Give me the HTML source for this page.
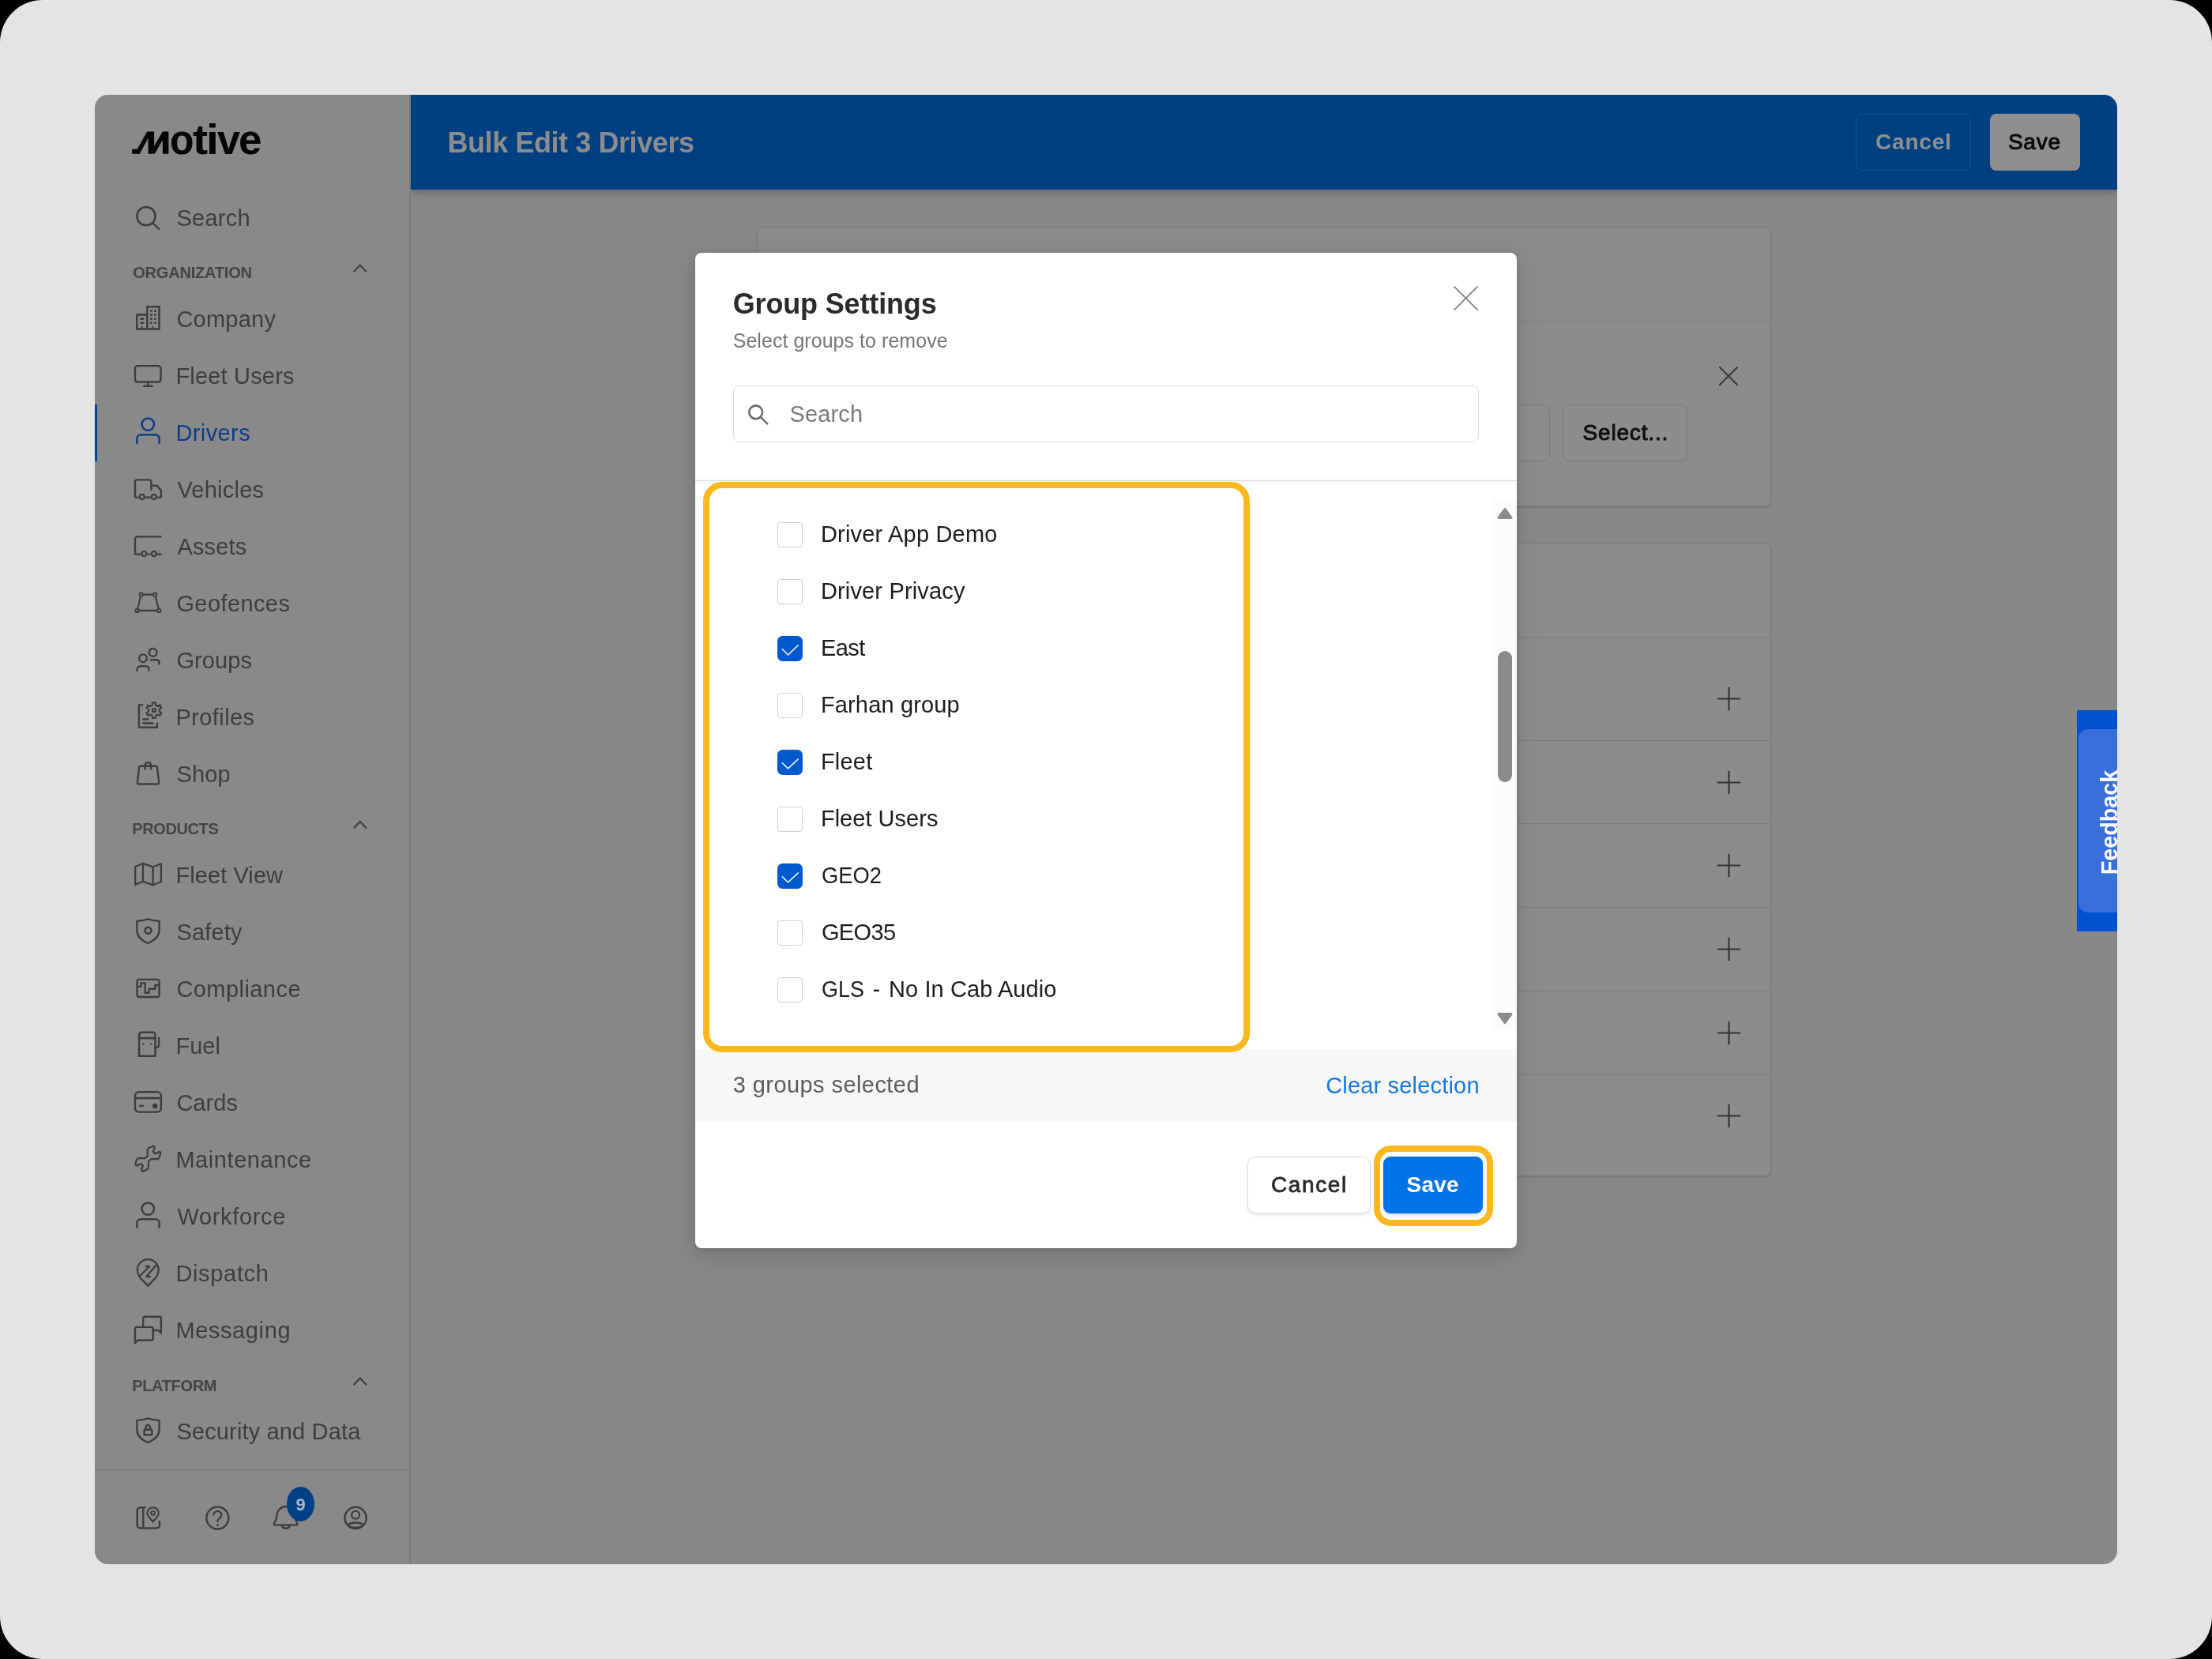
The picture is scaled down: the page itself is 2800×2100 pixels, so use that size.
<!DOCTYPE html>
<html lang="en">
<head>
<meta charset="utf-8">
<title>Bulk Edit 3 Drivers - Group Settings</title>
<style>
*{box-sizing:border-box;margin:0;padding:0}
html,body{width:2800px;height:2100px;background:#000;overflow:hidden}
body{font-family:"Liberation Sans",sans-serif;position:relative}
.frame{position:absolute;left:0;top:0;width:2800px;height:2100px;background:#e4e4e4;border-radius:54px;overflow:hidden}
.app{position:absolute;left:120px;top:120px;width:2560px;height:1860px;border-radius:17px;overflow:hidden;background:#888888}
.abs{position:absolute}
.t{position:absolute;white-space:pre;line-height:1;font-family:"Liberation Sans",sans-serif}
.page{position:absolute;left:-120px;top:-120px;width:2800px;height:2100px;will-change:transform}
.sidebar{position:absolute;left:120px;top:120px;width:400px;height:1860px;background:#898989;border-right:2px solid #7b7b7b}
.sbline{position:absolute;left:120px;top:1860px;width:398px;height:1px;background:#7a7a7a}
.activebar{position:absolute;left:120px;top:512px;width:3px;height:72px;background:#0047a3}
.header{position:absolute;left:520px;top:120px;width:2160px;height:120px;background:#003f80;box-shadow:0 3px 10px rgba(0,0,0,.28);clip-path:inset(0 0 -30px 0)}
.hbtn{position:absolute;top:144px;height:72px;border-radius:8px}
.card{position:absolute;left:958px;width:1284px;background:#8c8c8c;border:1px solid #7b7b7b;border-radius:8px;box-shadow:0 2px 2px rgba(0,0,0,.10)}
.hr{position:absolute;left:959px;width:1282px;height:1px;background:#7e7e7e}
.obtn{position:absolute;border:1px solid #7a7a7a;border-radius:8px;background:#8d8d8d}
.modal{position:absolute;left:880px;top:320px;width:1040px;height:1260px;background:#fff;border-radius:8px;box-shadow:0 8px 26px rgba(0,0,0,.17),0 1px 5px rgba(0,0,0,.10)}
.cb{position:absolute;left:984px;width:32px;height:32px;border:1px solid #cfcfcf;border-radius:4px;background:#fff}
.cb.on{border:none;background:#0059cc;border-radius:6.5px}
.hl{position:absolute;border:8px solid #fdb81e}
svg{position:absolute;overflow:visible}
</style>
</head>
<body>
<div class="frame">
<div class="app"><div class="page">
  <!-- main content background -->
  <div class="sidebar"></div>
  <div class="sbline"></div>
  <div class="activebar"></div>

  <!-- background cards -->
  <div class="card" style="top:287px;height:354px"></div>
  <div class="hr" style="top:407px"></div>
  <div class="obtn" style="left:1700px;top:512px;width:262px;height:72px"></div>
  <div class="obtn" style="left:1978px;top:512px;width:158px;height:72px"></div>

  <div class="card" style="top:687px;height:802px"></div>
  <div class="hr" style="top:807px"></div>
  <div class="hr" style="top:937px"></div>
  <div class="hr" style="top:1042px"></div>
  <div class="hr" style="top:1148px"></div>
  <div class="hr" style="top:1254px"></div>
  <div class="hr" style="top:1360px"></div>

  <!-- header -->
  <div class="header"></div>
  <div class="hbtn" style="left:2349px;width:146px;border:1px solid #1f548d"></div>
  <div class="hbtn" style="left:2519px;width:114px;background:#8f8f8f"></div>

  <!-- feedback tab -->
  <div class="abs" style="left:2629px;top:899px;width:60px;height:280px;background:#0052cc"></div>
  <div class="abs" style="left:2631px;top:923px;width:70px;height:232px;background:#386fd9;border-radius:12px"></div>
  <div class="abs" style="left:2669.8px;top:1040.7px;width:0;height:0"><span class="t" style="left:0;top:0;transform:translate(-50%,-50%) rotate(-90deg);font-size:28.7px;font-weight:700;color:#fff;letter-spacing:0.000px;">Feedback</span></div>

  <!-- modal -->
  <div class="modal"></div>
  <div class="abs" style="left:928px;top:488px;width:944px;height:72px;border:1px solid #dcdcdc;border-radius:8px"></div>
  <div class="abs" style="left:880px;top:608px;width:1040px;height:1px;background:#dcdcdc;box-shadow:0 1px 4px rgba(0,0,0,.22)"></div>
  <!-- scrollbar -->
  <div class="abs" style="left:1890px;top:632px;width:30px;height:672px;background:#fbfbfb"></div>
  <div class="abs" style="left:1896px;top:824px;width:18px;height:166px;border-radius:9px;background:#8b8b8b"></div>
  <!-- checkboxes -->
  <div class="cb" style="top:661px"></div>
  <div class="cb" style="top:733px"></div>
  <div class="cb on" style="top:805px"></div>
  <div class="cb" style="top:877px"></div>
  <div class="cb on" style="top:949px"></div>
  <div class="cb" style="top:1021px"></div>
  <div class="cb on" style="top:1093px"></div>
  <div class="cb" style="top:1165px"></div>
  <div class="cb" style="top:1237px"></div>
  <!-- selection bar -->
  <div class="abs" style="left:880px;top:1328px;width:1040px;height:92px;background:#f7f7f7"></div>
  <!-- list highlight -->
  <div class="hl" style="left:890px;top:609.5px;width:692px;height:722.5px;border-radius:24px"></div>
  <!-- modal buttons -->
  <div class="abs" style="left:1579px;top:1464px;width:156px;height:72px;border:1px solid #dedede;border-radius:10px;background:#fff;box-shadow:0 2px 4px rgba(0,0,0,.10)"></div>
  <div class="abs" style="left:1751px;top:1464px;width:126px;height:72px;border-radius:9px;background:#0073e6;box-shadow:0 2px 4px rgba(0,0,0,.18)"></div>
  <div class="hl" style="left:1738.5px;top:1450px;width:151.5px;height:101.5px;border-radius:22px"></div>

  <!-- icons -->
<svg style="left:0;top:0" width="2800" height="2100" viewBox="0 0 2800 2100" fill="none" stroke-linecap="round" stroke-linejoin="round"><polygon points="167.2,194.7 167.2,188.8 173.9,188.8 186.1,166.4 195.1,166.4 195.1,185.1 205.9,166.4 213.4,166.4 213.4,194.7 205.9,194.7 205.9,177.2 195.9,194.7 187.6,194.7 187.6,174.8 176.8,194.7" fill="#050505" stroke="none"/>
<circle cx="185" cy="273.7" r="11.6" stroke="#3d3d3d" stroke-width="2.5" fill="none"/>
<path d="M193.3 282.4 L201.4 289.8" stroke="#3d3d3d" stroke-width="2.5" fill="none" />
<path d="M448.3 343.5 L455.8 335.7 L463.3 343.5" stroke="#3d3d3d" stroke-width="2.2" fill="none" />
<path d="M448.3 1047.8 L455.8 1040.0 L463.3 1047.8" stroke="#3d3d3d" stroke-width="2.2" fill="none" />
<path d="M448.3 1752.4 L455.8 1744.6000000000001 L463.3 1752.4" stroke="#3d3d3d" stroke-width="2.2" fill="none" />
<path d="M186.3 388.3 H201.5 V416.6 H173.3 V398.5 H186.3 Z M186.3 398.5 V416.6" stroke="#3d3d3d" stroke-width="2.5" fill="none" stroke-linejoin="miter" stroke-linecap="butt"/>
<rect x="190.15" y="392.15" width="2.7" height="2.7" fill="#3d3d3d" stroke="none"/>
<rect x="195.05" y="392.15" width="2.7" height="2.7" fill="#3d3d3d" stroke="none"/>
<rect x="190.15" y="397.15" width="2.7" height="2.7" fill="#3d3d3d" stroke="none"/>
<rect x="195.05" y="397.15" width="2.7" height="2.7" fill="#3d3d3d" stroke="none"/>
<rect x="190.15" y="402.15" width="2.7" height="2.7" fill="#3d3d3d" stroke="none"/>
<rect x="195.05" y="402.15" width="2.7" height="2.7" fill="#3d3d3d" stroke="none"/>
<rect x="190.15" y="407.25" width="2.7" height="2.7" fill="#3d3d3d" stroke="none"/>
<rect x="195.05" y="407.25" width="2.7" height="2.7" fill="#3d3d3d" stroke="none"/>
<rect x="177.3" y="402.3" width="4.9" height="2.6" fill="#3d3d3d" stroke="none"/>
<rect x="177.3" y="407.5" width="4.9" height="2.6" fill="#3d3d3d" stroke="none"/>
<rect x="178.6" y="413" width="2" height="3.6" fill="#3d3d3d" stroke="none"/>
<rect x="192.8" y="413" width="2" height="3.6" fill="#3d3d3d" stroke="none"/>
<rect x="171" y="463.1" width="32.5" height="20.4" rx="3" stroke="#3d3d3d" stroke-width="2.4" fill="none"/>
<path d="M187.3 484 V488" stroke="#3d3d3d" stroke-width="2.4" fill="none" />
<path d="M181.3 488.7 H193.5" stroke="#3d3d3d" stroke-width="2.6" fill="none" stroke-linecap="butt"/>
<circle cx="187.3" cy="537.1" r="7.7" stroke="#0b3d88" stroke-width="2.5" fill="none"/>
<path d="M173.4 561.8 V555.2 a5 5 0 0 1 5 -5 H196.6 a5 5 0 0 1 5 5 V561.8" stroke="#0b3d88" stroke-width="2.5" fill="none" stroke-linecap="butt"/>
<circle cx="187.3" cy="1530.1" r="7.7" stroke="#3d3d3d" stroke-width="2.5" fill="none"/>
<path d="M173.4 1554.8 V1548.2 a5 5 0 0 1 5 -5 H196.6 a5 5 0 0 1 5 5 V1554.8" stroke="#3d3d3d" stroke-width="2.5" fill="none" stroke-linecap="butt"/>
<path d="M191.4 620.7 V610 a2.6 2.6 0 0 0 -2.6 -2.6 H173.6 a2.6 2.6 0 0 0 -2.6 2.6 V629.6 H175.4" stroke="#3d3d3d" stroke-width="2.4" fill="none" stroke-linecap="butt"/>
<path d="M191.4 614.6 H197.8 a1.6 1.6 0 0 1 1.2 .55 L203.5 620.3 a1.6 1.6 0 0 1 .4 1.05 V629.6 H199.2" stroke="#3d3d3d" stroke-width="2.4" fill="none" stroke-linecap="butt"/>
<path d="M184 629.6 H190.6" stroke="#3d3d3d" stroke-width="2.4" fill="none" stroke-linecap="butt"/>
<circle cx="179.7" cy="629" r="3.05" stroke="#3d3d3d" stroke-width="2.3" fill="none"/>
<circle cx="194.9" cy="629" r="3.05" stroke="#3d3d3d" stroke-width="2.3" fill="none"/>
<path d="M204.6 679.4 H174 a3 3 0 0 0 -3 3 V701.6 H178.1" stroke="#3d3d3d" stroke-width="2.4" fill="none" stroke-linecap="butt"/>
<path d="M186.7 701.6 H190.6 M199.2 701.6 H204.6" stroke="#3d3d3d" stroke-width="2.4" fill="none" stroke-linecap="butt"/>
<circle cx="182.4" cy="701" r="3.05" stroke="#3d3d3d" stroke-width="2.3" fill="none"/>
<circle cx="194.9" cy="701" r="3.05" stroke="#3d3d3d" stroke-width="2.3" fill="none"/>
<path d="M181.3 752.6 H193.5" stroke="#3d3d3d" stroke-width="2.4" fill="none" />
<path d="M176.4 772.9 H198.4" stroke="#3d3d3d" stroke-width="2.4" fill="none" />
<path d="M178 755.3 L174.2 770.2" stroke="#3d3d3d" stroke-width="2.0" fill="none" />
<path d="M196.8 755.3 L200.6 770.2" stroke="#3d3d3d" stroke-width="2.0" fill="none" />
<rect x="176.5" y="750.5" width="4.2" height="4.2" rx="1.6" stroke="#3d3d3d" stroke-width="2.0" fill="none"/>
<rect x="194.1" y="750.5" width="4.2" height="4.2" rx="1.6" stroke="#3d3d3d" stroke-width="2.0" fill="none"/>
<rect x="171.5" y="770.8" width="4.2" height="4.2" rx="1.6" stroke="#3d3d3d" stroke-width="2.0" fill="none"/>
<rect x="199.1" y="770.8" width="4.2" height="4.2" rx="1.6" stroke="#3d3d3d" stroke-width="2.0" fill="none"/>
<circle cx="193.6" cy="825.9" r="4.9" stroke="#3d3d3d" stroke-width="2.4" fill="none"/>
<path d="M190.2 835.3 H198.4 a3 3 0 0 1 3 3 V841.6" stroke="#3d3d3d" stroke-width="2.4" fill="none" stroke-linecap="butt"/>
<circle cx="181" cy="833.3" r="4.9" stroke="#3d3d3d" stroke-width="2.4" fill="none"/>
<path d="M173.6 849.8 V847.3 a4 4 0 0 1 4 -4 H184.6 a4 4 0 0 1 4 4 V849.8" stroke="#3d3d3d" stroke-width="2.4" fill="none" stroke-linecap="butt"/>
<path d="M181.3 892.4 H175.9 V920.7 H198.9 V914.4" stroke="#3d3d3d" stroke-width="2.4" fill="none" stroke-linecap="butt" stroke-linejoin="miter"/>
<path d="M180.3 910.4 H188.2 M180.3 915.6 H194.5" stroke="#3d3d3d" stroke-width="2.5" fill="none" stroke-linecap="butt"/>
<path d="M192.65 892.68 L192.99 889.38 L196.81 889.38 L197.15 892.68 L199.43 893.99 L202.45 892.64 L204.36 895.94 L201.67 897.88 L201.67 900.52 L204.36 902.46 L202.45 905.76 L199.43 904.41 L197.15 905.72 L196.81 909.02 L192.99 909.02 L192.65 905.72 L190.37 904.41 L187.35 905.76 L185.44 902.46 L188.13 900.52 L188.13 897.88 L185.44 895.94 L187.35 892.64 L190.37 893.99 Z" stroke="#3d3d3d" stroke-width="2.2" fill="none" />
<circle cx="194.9" cy="899.2" r="2.1" stroke="#3d3d3d" stroke-width="2.2" fill="none"/>
<path d="M178.1 969.7 H197 a2 2 0 0 1 2 1.9 L201.2 990.3 a2 2 0 0 1 -2 2.2 H175.9 a2 2 0 0 1 -2 -2.2 L176.1 971.6 a2 2 0 0 1 2 -1.9 Z" stroke="#3d3d3d" stroke-width="2.4" fill="none" />
<path d="M183.7 974.4 V968.8 a3.7 3.7 0 0 1 7.4 0 V974.4" stroke="#3d3d3d" stroke-width="2.4" fill="none" stroke-linecap="butt"/>
<path d="M171.2 1097.2 L181 1092.8 L193.6 1097.5 L203.9 1093.2 V1116.2 L193.6 1120.3 L181 1115.6 L171.2 1120 Z" stroke="#3d3d3d" stroke-width="2.3" fill="none" />
<path d="M181 1092.8 V1115.6 M193.6 1097.5 V1120.3" stroke="#3d3d3d" stroke-width="2.3" fill="none" />
<path d="M173.4 1165.9 Q180.5 1165.6 187.1 1163.3 Q193.8 1165.6 201.6 1165.9 V1177.5 C201.6 1185.5 195.5 1190.5 187.1 1194 C179 1190.5 173.4 1185.5 173.4 1177.5 Z" stroke="#3d3d3d" stroke-width="2.4" fill="none" />
<circle cx="187.5" cy="1177.8" r="4.0" stroke="#3d3d3d" stroke-width="2.4" fill="none"/>
<path d="M173.4 1797.9 Q180.5 1797.6 187.1 1795.3 Q193.8 1797.6 201.6 1797.9 V1809.5 C201.6 1817.5 195.5 1822.5 187.1 1826 C179 1822.5 173.4 1817.5 173.4 1809.5 Z" stroke="#3d3d3d" stroke-width="2.4" fill="none" />
<rect x="182.6" y="1809.7" width="9.8" height="6.5" rx="0.5" stroke="#3d3d3d" stroke-width="2.4" fill="none"/>
<path d="M184.5 1809.7 V1807.2 a2.8 3.4 0 0 1 5.6 0 V1809.7" stroke="#3d3d3d" stroke-width="2.4" fill="none" stroke-linecap="butt"/>
<rect x="173.6" y="1239.9" width="28" height="22.1" rx="2.5" stroke="#3d3d3d" stroke-width="2.4" fill="none"/>
<path d="M173.6 1248.9 H178.4 V1244.4 H183.7 V1256.7 H188.6 V1251.8 H196.3 V1247 H201.6" stroke="#3d3d3d" stroke-width="2.4" fill="none" stroke-linejoin="miter" stroke-linecap="butt"/>
<path d="M176.1 1336.7 V1309.7 a3 3 0 0 1 3 -3 H193.5 a3 3 0 0 1 3 3 V1336.7 Z" stroke="#3d3d3d" stroke-width="2.5" fill="none" stroke-linejoin="miter"/>
<path d="M176.1 1314.1 H196.5" stroke="#3d3d3d" stroke-width="2.7" fill="none" stroke-linecap="butt"/>
<rect x="180.1" y="1320.7" width="2.2" height="2.2" fill="#3d3d3d"/><rect x="190.2" y="1320.7" width="2.2" height="2.2" fill="#3d3d3d"/>
<path d="M196.5 1325.8 H198.2 a3 3 0 0 0 3 -3 V1313.8" stroke="#3d3d3d" stroke-width="2.4" fill="none" />
<rect x="171" y="1382.3" width="32.9" height="25.3" rx="4.8" stroke="#3d3d3d" stroke-width="2.4" fill="none"/>
<path d="M171 1390 H203.9" stroke="#3d3d3d" stroke-width="2.4" fill="none" stroke-linecap="butt"/>
<path d="M175.8 1399.8 H182" stroke="#3d3d3d" stroke-width="2.2" fill="none" stroke-linecap="butt"/>
<circle cx="196.2" cy="1400" r="3.3" stroke="none" stroke-width="0" fill="#3d3d3d"/>
<path d="M186.76 1463.32 L186.76 1455.00 L188.21 1453.19 L193.63 1450.66 L195.62 1451.74 L195.26 1454.27 L193.82 1457.53 L196.17 1460.24 L199.24 1459.34 L200.87 1457.71 L203.04 1458.61 L203.22 1460.42 L201.59 1465.49 L199.78 1467.11 L191.46 1467.11 L188.57 1469.46 L187.99 1469.97 L187.99 1478.29 L186.55 1480.10 L181.12 1482.63 L179.13 1481.54 L179.49 1479.01 L180.94 1475.76 L178.59 1473.05 L175.52 1473.95 L173.89 1475.58 L171.72 1474.67 L171.54 1472.86 L173.16 1467.80 L174.97 1466.17 L183.29 1466.17 L186.18 1463.82 Z" stroke="#3d3d3d" stroke-width="2.2" fill="none" />
<path d="M187.3 1627.7 C182.3 1621.5 173.9 1616.8 173.9 1607.5 a13.4 13.4 0 0 1 26.8 0 C200.7 1616.8 192.3 1621.5 187.3 1627.7 Z" stroke="#3d3d3d" stroke-width="2.3" fill="none" />
<path d="M183.7 1603 H189.6 L176.8 1615.2" stroke="#3d3d3d" stroke-width="2.3" fill="none" stroke-linejoin="bevel" stroke-linecap="butt"/>
<path d="M190.9 1616.2 H185 L197.8 1601.2" stroke="#3d3d3d" stroke-width="2.3" fill="none" stroke-linejoin="bevel" stroke-linecap="butt"/>
<path d="M181.2 1679.3 V1668.9 a2.2 2.2 0 0 1 2.2 -2.2 H201.7 a2.2 2.2 0 0 1 2.2 2.2 V1687.3 L200.6 1684 H194.4" stroke="#3d3d3d" stroke-width="2.4" fill="none" stroke-linecap="butt"/>
<path d="M174.4 1696.5 L171 1699.9 V1682.1 a2.2 2.2 0 0 1 2.2 -2.2 H191.6 a2.2 2.2 0 0 1 2.2 2.2 V1694.3 a2.2 2.2 0 0 1 -2.2 2.2 Z" stroke="#3d3d3d" stroke-width="2.4" fill="none" />
<path d="M184.6 1908.2 H177.7 a4 4 0 0 0 -4 4 V1930.4 a4 4 0 0 0 4 4 H198 a4 4 0 0 0 4 -4 V1924.7" stroke="#3d3d3d" stroke-width="2.4" fill="none" stroke-linecap="butt"/>
<path d="M181.3 1908.2 V1934.4" stroke="#3d3d3d" stroke-width="2.4" fill="none" stroke-linecap="butt"/>
<path d="M193.6 1926 C190.5 1922.5 186.4 1919.5 186.4 1915.3 a7.2 7.2 0 0 1 14.4 0 C200.8 1919.5 196.7 1922.5 193.6 1926 Z" stroke="#3d3d3d" stroke-width="2.2" fill="none" />
<circle cx="193.6" cy="1915.3" r="2.4" stroke="#3d3d3d" stroke-width="2.0" fill="none"/>
<circle cx="275.4" cy="1921.5" r="14" stroke="#3d3d3d" stroke-width="2.4" fill="none"/>
<path d="M270.4 1917.6 a5 4.8 0 1 1 7.6 4.1 C276 1922.9 275.4 1923.7 275.4 1925.8" stroke="#3d3d3d" stroke-width="2.3" fill="none" />
<circle cx="275.4" cy="1930.6" r="1.5" stroke="none" stroke-width="0" fill="#3d3d3d"/>
<path d="M348.2 1930.4 C346.6 1930.4 346.2 1929 347.2 1927.8 C349.8 1924.6 350.2 1922.5 350.4 1918.5 C350.8 1911.5 356 1907 361.8 1907 C367.6 1907 372.8 1911.5 373.2 1918.5 C373.4 1922.5 373.8 1924.6 376.1 1927.8 C377 1929 376.6 1930.4 375 1930.4 Z" stroke="#3d3d3d" stroke-width="2.3" fill="none" />
<path d="M357 1931.5 a5 4.6 0 0 0 9.6 0" stroke="#3d3d3d" stroke-width="2.4" fill="none" />
<circle cx="450.1" cy="1921.4" r="13.6" stroke="#3d3d3d" stroke-width="2.4" fill="none"/>
<circle cx="450.1" cy="1917.7" r="5" stroke="#3d3d3d" stroke-width="2.3" fill="none"/>
<clipPath id="uc"><circle cx="450.1" cy="1921.4" r="13.6"/></clipPath>
<ellipse cx="450.1" cy="1930.6" rx="8.8" ry="3.1" stroke="#3d3d3d" stroke-width="2.3" fill="none" clip-path="url(#uc)"/>
<ellipse cx="380.5" cy="1903.8" rx="17.5" ry="21.9" fill="#004086" stroke="none"/></svg>
<svg style="left:1840px;top:362px" width="31" height="31" viewBox="0 0 31 31" fill="none" stroke="#737373" stroke-width="1.7" stroke-linecap="round" stroke-linejoin="round" ><path d="M1 1 L30 30 M30 1 L1 30"/></svg>
<svg style="left:2176px;top:464px" width="24" height="24" viewBox="0 0 24 24" fill="none" stroke="#3a3a3a" stroke-width="2.2" stroke-linecap="round" stroke-linejoin="round" ><path d="M1 1 L23 23 M23 1 L1 23"/></svg>
<svg style="left:2173px;top:868.5px" width="31" height="31" viewBox="0 0 31 31" fill="none" stroke="#333" stroke-width="2.1" stroke-linecap="round" stroke-linejoin="round" ><path d="M15.5 .8 V30.2 M.8 15.5 H30.2" stroke-linecap="butt"/></svg>
<svg style="left:2173px;top:974.5px" width="31" height="31" viewBox="0 0 31 31" fill="none" stroke="#333" stroke-width="2.1" stroke-linecap="round" stroke-linejoin="round" ><path d="M15.5 .8 V30.2 M.8 15.5 H30.2" stroke-linecap="butt"/></svg>
<svg style="left:2173px;top:1080.2px" width="31" height="31" viewBox="0 0 31 31" fill="none" stroke="#333" stroke-width="2.1" stroke-linecap="round" stroke-linejoin="round" ><path d="M15.5 .8 V30.2 M.8 15.5 H30.2" stroke-linecap="butt"/></svg>
<svg style="left:2173px;top:1186.0px" width="31" height="31" viewBox="0 0 31 31" fill="none" stroke="#333" stroke-width="2.1" stroke-linecap="round" stroke-linejoin="round" ><path d="M15.5 .8 V30.2 M.8 15.5 H30.2" stroke-linecap="butt"/></svg>
<svg style="left:2173px;top:1291.5px" width="31" height="31" viewBox="0 0 31 31" fill="none" stroke="#333" stroke-width="2.1" stroke-linecap="round" stroke-linejoin="round" ><path d="M15.5 .8 V30.2 M.8 15.5 H30.2" stroke-linecap="butt"/></svg>
<svg style="left:2173px;top:1396.9px" width="31" height="31" viewBox="0 0 31 31" fill="none" stroke="#333" stroke-width="2.1" stroke-linecap="round" stroke-linejoin="round" ><path d="M15.5 .8 V30.2 M.8 15.5 H30.2" stroke-linecap="butt"/></svg>
<svg style="left:945px;top:510px" width="30" height="30" viewBox="0 0 30 30" fill="none" stroke="#6b6b6b" stroke-width="2.6" stroke-linecap="round" stroke-linejoin="round" ><circle cx="11.7" cy="11.8" r="8.4"/><path d="M18 18.2 L26.3 26.4"/></svg>
<svg style="left:1895px;top:642px" width="20" height="16" viewBox="0 0 20 16" fill="none" stroke="#3d3d3d" stroke-width="2.4" stroke-linecap="round" stroke-linejoin="round" ><path d="M10 2.5 L18 13.5 H2 Z" fill="#8b8b8b" stroke="#8b8b8b" stroke-width="3"/></svg>
<svg style="left:1895px;top:1280.5px" width="20" height="16" viewBox="0 0 20 16" fill="none" stroke="#3d3d3d" stroke-width="2.4" stroke-linecap="round" stroke-linejoin="round" ><path d="M10 13.5 L18 2.5 H2 Z" fill="#8b8b8b" stroke="#8b8b8b" stroke-width="3"/></svg>
<svg style="left:984px;top:805px" width="32" height="32" viewBox="0 0 32 32" fill="none" stroke="#e6eeff" stroke-width="1.6" stroke-linecap="round" stroke-linejoin="round" ><path d="M6.4 16.9 L13.6 23.8 L26.3 11.9"/></svg>
<svg style="left:984px;top:949px" width="32" height="32" viewBox="0 0 32 32" fill="none" stroke="#e6eeff" stroke-width="1.6" stroke-linecap="round" stroke-linejoin="round" ><path d="M6.4 16.9 L13.6 23.8 L26.3 11.9"/></svg>
<svg style="left:984px;top:1093px" width="32" height="32" viewBox="0 0 32 32" fill="none" stroke="#e6eeff" stroke-width="1.6" stroke-linecap="round" stroke-linejoin="round" ><path d="M6.4 16.9 L13.6 23.8 L26.3 11.9"/></svg>
  <!-- all text -->
<span class="t" style="left:223.40px;top:261.55px;font-size:29px;font-weight:400;color:#3d3d3d;letter-spacing:0.269px;">Search</span>
<span class="t" style="left:168.20px;top:334.87px;font-size:20px;font-weight:700;color:#444;letter-spacing:-0.201px;">ORGANIZATION</span>
<span class="t" style="left:167.20px;top:1039.27px;font-size:20px;font-weight:700;color:#444;letter-spacing:-0.384px;">PRODUCTS</span>
<span class="t" style="left:167.20px;top:1743.67px;font-size:20px;font-weight:700;color:#444;letter-spacing:-0.336px;">PLATFORM</span>
<span class="t" style="left:223.40px;top:389.95px;font-size:29px;font-weight:400;color:#3d3d3d;letter-spacing:0.231px;">Company</span>
<span class="t" style="left:222.40px;top:461.95px;font-size:29px;font-weight:400;color:#3d3d3d;letter-spacing:0.184px;">Fleet Users</span>
<span class="t" style="left:222.40px;top:533.95px;font-size:29px;font-weight:400;color:#0b3d88;letter-spacing:0.412px;">Drivers</span>
<span class="t" style="left:224.40px;top:605.95px;font-size:29px;font-weight:400;color:#3d3d3d;letter-spacing:0.241px;">Vehicles</span>
<span class="t" style="left:224.40px;top:677.95px;font-size:29px;font-weight:400;color:#3d3d3d;letter-spacing:0.154px;">Assets</span>
<span class="t" style="left:223.40px;top:749.95px;font-size:29px;font-weight:400;color:#3d3d3d;letter-spacing:0.405px;">Geofences</span>
<span class="t" style="left:223.40px;top:821.95px;font-size:29px;font-weight:400;color:#3d3d3d;letter-spacing:0.080px;">Groups</span>
<span class="t" style="left:222.40px;top:893.95px;font-size:29px;font-weight:400;color:#3d3d3d;letter-spacing:0.429px;">Profiles</span>
<span class="t" style="left:223.40px;top:965.95px;font-size:29px;font-weight:400;color:#3d3d3d;letter-spacing:0.200px;">Shop</span>
<span class="t" style="left:222.40px;top:1094.05px;font-size:29px;font-weight:400;color:#3d3d3d;letter-spacing:0.087px;">Fleet View</span>
<span class="t" style="left:223.40px;top:1166.05px;font-size:29px;font-weight:400;color:#3d3d3d;letter-spacing:0.197px;">Safety</span>
<span class="t" style="left:223.40px;top:1238.05px;font-size:29px;font-weight:400;color:#3d3d3d;letter-spacing:0.444px;">Compliance</span>
<span class="t" style="left:222.40px;top:1310.05px;font-size:29px;font-weight:400;color:#3d3d3d;letter-spacing:0.043px;">Fuel</span>
<span class="t" style="left:223.40px;top:1382.05px;font-size:29px;font-weight:400;color:#3d3d3d;letter-spacing:0.036px;">Cards</span>
<span class="t" style="left:222.40px;top:1454.05px;font-size:29px;font-weight:400;color:#3d3d3d;letter-spacing:0.567px;">Maintenance</span>
<span class="t" style="left:224.40px;top:1526.05px;font-size:29px;font-weight:400;color:#3d3d3d;letter-spacing:0.665px;">Workforce</span>
<span class="t" style="left:222.40px;top:1598.05px;font-size:29px;font-weight:400;color:#3d3d3d;letter-spacing:0.671px;">Dispatch</span>
<span class="t" style="left:222.40px;top:1670.05px;font-size:29px;font-weight:400;color:#3d3d3d;letter-spacing:0.611px;">Messaging</span>
<span class="t" style="left:223.40px;top:1798.05px;font-size:29px;font-weight:400;color:#3d3d3d;letter-spacing:0.151px;">Security and Data</span>
<span class="t" style="left:380.60px;top:1893.68px;font-size:22px;font-weight:700;color:#a7b7cd;letter-spacing:0.000px;transform:translateX(-50%);">9</span>
<span class="t" style="left:566.40px;top:163.03px;font-size:36px;font-weight:700;color:#8c8c8c;letter-spacing:-0.416px;">Bulk Edit 3 Drivers</span>
<span class="t" style="left:2374.00px;top:166.40px;font-size:28px;font-weight:700;color:#909090;letter-spacing:0.812px;">Cancel</span>
<span class="t" style="left:2541.90px;top:166.40px;font-size:28px;font-weight:400;color:#0c0c0c;letter-spacing:0.784px;-webkit-text-stroke:1.0px #0c0c0c;">Save</span>
<span class="t" style="left:2003.50px;top:533.80px;font-size:28px;font-weight:400;color:#101010;letter-spacing:0.828px;-webkit-text-stroke:1.0px #101010;">Select...</span>
<span class="t" style="left:927.70px;top:366.53px;font-size:36px;font-weight:700;color:#2b2b2b;letter-spacing:-0.152px;">Group Settings</span>
<span class="t" style="left:927.70px;top:419.04px;font-size:25px;font-weight:400;color:#767676;letter-spacing:0.042px;">Select groups to remove</span>
<span class="t" style="left:999.40px;top:509.85px;font-size:29px;font-weight:400;color:#7a7a7a;letter-spacing:0.169px;">Search</span>
<span class="t" style="left:1038.90px;top:662.25px;font-size:29px;font-weight:400;color:#1c1c1c;letter-spacing:0.195px;">Driver App Demo</span>
<span class="t" style="left:1038.90px;top:734.25px;font-size:29px;font-weight:400;color:#1c1c1c;letter-spacing:0.157px;">Driver Privacy</span>
<span class="t" style="left:1038.90px;top:806.25px;font-size:29px;font-weight:400;color:#1c1c1c;letter-spacing:-0.524px;">East</span>
<span class="t" style="left:1038.90px;top:878.25px;font-size:29px;font-weight:400;color:#1c1c1c;letter-spacing:0.156px;">Farhan group</span>
<span class="t" style="left:1038.90px;top:950.25px;font-size:29px;font-weight:400;color:#1c1c1c;letter-spacing:0.221px;">Fleet</span>
<span class="t" style="left:1038.90px;top:1022.25px;font-size:29px;font-weight:400;color:#1c1c1c;letter-spacing:0.024px;">Fleet Users</span>
<span class="t" style="left:1039.96px;top:1094.25px;font-size:29px;font-weight:400;color:#1c1c1c;letter-spacing:0.000px;transform-origin:0 0;transform:scaleX(0.9432);">GEO2</span>
<span class="t" style="left:1039.90px;top:1166.25px;font-size:29px;font-weight:400;color:#1c1c1c;letter-spacing:-0.646px;">GEO35</span>
<span class="t" style="left:1039.97px;top:1238.25px;font-size:29px;font-weight:400;color:#1c1c1c;letter-spacing:0.000px;transform-origin:0 0;transform:scaleX(0.9297);">GLS</span>
<span class="t" style="left:1104.40px;top:1238.25px;font-size:29px;font-weight:400;color:#1c1c1c;letter-spacing:0.000px;">-</span>
<span class="t" style="left:1125.00px;top:1238.25px;font-size:29px;font-weight:400;color:#1c1c1c;letter-spacing:0.088px;">No In Cab Audio</span>
<span class="t" style="left:927.70px;top:1359.45px;font-size:29px;font-weight:400;color:#5c5c5c;letter-spacing:0.431px;">3 groups selected</span>
<span class="t" style="left:1678.20px;top:1359.75px;font-size:29px;font-weight:400;color:#1877e6;letter-spacing:0.180px;">Clear selection</span>
<span class="t" style="left:1609.00px;top:1485.60px;font-size:28px;font-weight:400;color:#2a2a2a;letter-spacing:1.613px;-webkit-text-stroke:0.8px #2a2a2a;">Cancel</span>
<span class="t" style="left:1780.50px;top:1485.60px;font-size:28px;font-weight:700;color:#fff;letter-spacing:0.260px;">Save</span>
  <span class="t" style="left:214.83px;top:149.7px;font-size:53.5px;font-weight:700;color:#050505;transform-origin:0 0;transform:scaleX(0.934)">o</span>
  <span class="t" style="left:243.53px;top:149.7px;font-size:53.5px;font-weight:700;color:#050505;transform-origin:0 0;transform:scaleX(1.069)">t</span>
  <span class="t" style="left:260.71px;top:149.7px;font-size:53.5px;font-weight:700;color:#050505;transform-origin:0 0;transform:scaleX(1.071)">i</span>
  <span class="t" style="left:275.00px;top:149.7px;font-size:53.5px;font-weight:700;color:#050505;transform-origin:0 0;transform:scaleX(0.976)">v</span>
  <span class="t" style="left:301.72px;top:149.7px;font-size:53.5px;font-weight:700;color:#050505;transform-origin:0 0;transform:scaleX(0.992)">e</span>
</div></div>
</div>
</body>
</html>
